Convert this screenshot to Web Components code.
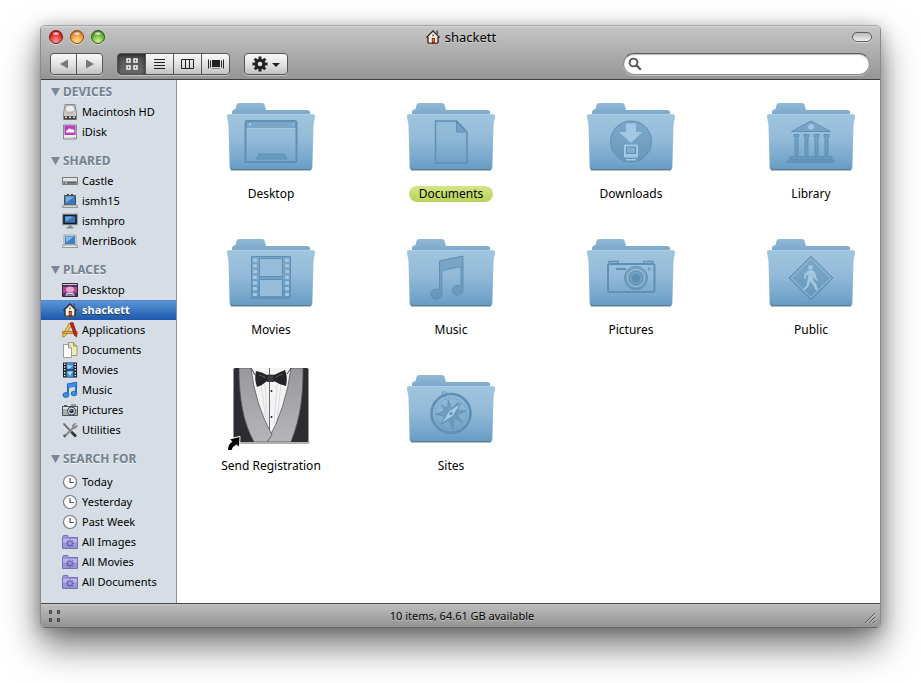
<!DOCTYPE html>
<html lang="en">
<head>
<meta charset="utf-8">
<title>shackett</title>
<style>
  html { height: 100%; }
  body {
    box-sizing: border-box; min-height: 100%; margin: 0; padding: 25px 40px 55px;
    display: flex; background: #fff; overflow: hidden;
    font: 11px/16px "Noto Sans", "Open Sans", sans-serif; color: #000;
  }
</style>
</head>
<body>
<finder-window>
  <title-bar slot="title">shackett</title-bar>
  <tool-bar slot="tools">
    <tool-group label="History">
      <tool-button icon="back" label="Back" size="nav"></tool-button>
      <tool-button icon="forward" label="Forward" size="nav"></tool-button>
    </tool-group>
    <tool-group label="View">
      <tool-button icon="grid" label="Icon view" pressed></tool-button>
      <tool-button icon="list" label="List view"></tool-button>
      <tool-button icon="columns" label="Column view"></tool-button>
      <tool-button icon="flow" label="Cover Flow view"></tool-button>
    </tool-group>
    <tool-group label="Action">
      <tool-button icon="action" label="Action menu" size="wide"></tool-button>
    </tool-group>
    <search-field slot="end"></search-field>
  </tool-bar>
  <side-bar slot="side">
    <side-section heading="DEVICES">
      <side-item icon="drive">Macintosh HD</side-item>
      <side-item icon="idisk">iDisk</side-item>
    </side-section>
    <side-section heading="SHARED">
      <side-item icon="server">Castle</side-item>
      <side-item icon="laptopOld">ismh15</side-item>
      <side-item icon="monitor">ismhpro</side-item>
      <side-item icon="laptop">MerriBook</side-item>
    </side-section>
    <side-section heading="PLACES">
      <side-item icon="desktop">Desktop</side-item>
      <side-item icon="home" selected>shackett</side-item>
      <side-item icon="apps">Applications</side-item>
      <side-item icon="docs">Documents</side-item>
      <side-item icon="film">Movies</side-item>
      <side-item icon="note">Music</side-item>
      <side-item icon="camera">Pictures</side-item>
      <side-item icon="tools">Utilities</side-item>
    </side-section>
    <side-section heading="SEARCH FOR" spaced>
      <side-item icon="clock">Today</side-item>
      <side-item icon="clock">Yesterday</side-item>
      <side-item icon="clock">Past Week</side-item>
      <side-item icon="smart">All Images</side-item>
      <side-item icon="smart">All Movies</side-item>
      <side-item icon="smart">All Documents</side-item>
    </side-section>
  </side-bar>
  <file-grid>
    <file-item art="desktop">Desktop</file-item>
    <file-item art="documents" tagged>Documents</file-item>
    <file-item art="downloads">Downloads</file-item>
    <file-item art="library">Library</file-item>
    <file-item art="movies">Movies</file-item>
    <file-item art="music">Music</file-item>
    <file-item art="pictures">Pictures</file-item>
    <file-item art="public">Public</file-item>
    <file-item art="tuxedo">Send Registration</file-item>
    <file-item art="sites">Sites</file-item>
  </file-grid>
  <status-bar slot="status">10 items, 64.61 GB available</status-bar>
</finder-window>

<script>
const svg = (w, h, body) =>
  `<svg width="${w}" height="${h}" viewBox="0 0 ${w} ${h}" aria-hidden="true">${body}</svg>`;

const range = (n, f) => Array.from({ length: n }, (_, i) => f(i)).join('');
const teeth = (n, cx, cy, r, w, h, fill) => range(n, i =>
  `<rect x="${cx - w / 2}" y="${cy - r}" width="${w}" height="${h}" fill="${fill}" transform="rotate(${i * 360 / n} ${cx} ${cy})"/>`);

/* Toolbar glyphs */
const TOOL = {
  back: svg(16, 16, '<path d="M12 3.5v9L4 8z" fill="#777"/>'),
  forward: svg(16, 16, '<path d="M4 3.5v9L12 8z" fill="#777"/>'),
  grid: svg(14, 14, '<g fill="#333" stroke="#fff" stroke-width="1.4"><rect x="2" y="2" width="3" height="3"/><rect x="9" y="2" width="3" height="3"/><rect x="2" y="9" width="3" height="3"/><rect x="9" y="9" width="3" height="3"/></g>'),
  list: svg(12, 12, '<path d="M0 1.5h11M0 4.5h11M0 7.5h11M0 10.5h11" stroke="#222"/>'),
  columns: svg(14, 12, '<path d="M.5 1.5h12v9H.5zM4.5 1v10M8.5 1v10" fill="none" stroke="#222"/>'),
  flow: svg(16, 12, '<path d="M.5 1.5v9M2.5 2.5v7M13.5 2.5v7M15.5 1.5v9" stroke="#222"/><path d="M4 2h8v7H4z" fill="#222"/><path d="M4 10.5h8" stroke="#888"/>'),
  action: svg(30, 16,
    teeth(8, 9, 8, 7.5, 3, 4, '#222') +
    '<circle cx="9" cy="8" r="3.8" fill="none" stroke="#222" stroke-width="3"/><path d="M21 7h8l-4 4z" fill="#222"/>')
};

const house =
  '<path d="M3 8v6.500h10V8L8 3.200z" fill="#f6efe4"/><path d="M3 13.500h10v1.500H3z" fill="#6b4a3b"/>' +
  '<path d="M11.200 1.500h1.800v4l-1.800-1.500z" fill="#555"/>' +
  '<path d="M1.300 8.600 8 1.900l6.700 6.700M3 8v6M13 8v6" fill="none" stroke="#2b2422" stroke-width="1.300"/>' +
  '<rect x="6.800" y="9" width="3" height="5.500" fill="#7e1f10"/><rect x="7.600" y="10" width="1.400" height="3" fill="#e07a2c"/><path d="M7 5.500h2v2H7z" fill="#b0814f"/>';

const clock =
  '<circle cx="8" cy="8" r="6.500" fill="#fff" stroke="#76797e" stroke-width="1.200"/>' +
  '<path d="M8 4v4.500h3.800" fill="none" stroke="#555" stroke-width="1.200"/>';

/* Sidebar pictures, 16 by 16 */
const SIDE = {
  drive: '<path d="M3 .5h10l1.500 9v6h-13v-6z" fill="#c9c9c9" stroke="#777" stroke-width=".8"/><ellipse cx="8" cy="5" rx="4.500" ry="3.600" fill="#eee" stroke="#a5a5a5" stroke-width=".8"/><path d="M5 7.500h6v2.500H5z" fill="#b5b5b5"/><path d="M2 12h12v3.500H2z" fill="#444"/><path d="M3 12.500h2v1.500H3zM7 12.500h2v1.500H7zM11 12.500h2v1.500h-2z" fill="#ddd"/>',
  idisk: '<path d="M1.500 1h13v14h-13z" fill="#ddd" stroke="#777" stroke-width=".8"/><path d="M2.500 1.500h11v9.500h-11z" fill="#b63fc4"/><path d="M4 8.500a2 2 0 0 1 1.500-2.500 2.300 2.300 0 0 1 4-.5A2 2 0 0 1 12 8.500z" fill="#fff"/><path d="M2 12h12" stroke="#fff"/><circle cx="12.500" cy="13.500" r=".6" fill="#5a5"/>',
  server: '<path d="M.5 4.500h15v7H.5z" fill="#9a9a9a" stroke="#6a6a6a" stroke-width=".8"/><path d="M1 5h14v3H1z" fill="#e4e4e4"/><path d="M2 9.800h12" stroke="#444"/><path d="M3 9.800h2" stroke="#ddd"/>',
  laptopOld: '<path d="M2.500 2.500h11v9.500h-11z" fill="#3b76b8" stroke="#4b4f55"/><path d="M3.500 3.500h9L4 10z" fill="#76ace0"/><path d="M5 1.500h2M9 1.500h2" stroke="#444"/><path d="M1 12h14l.8 2.500H.2z" fill="#d5d5d5" stroke="#777" stroke-width=".7"/>',
  monitor: '<path d="M.7 1.200h14.600v10.500H.7z" fill="#3b76b8" stroke="#9a9ea4" stroke-width="1.200"/><path d="M2 2.500h12v8H2z" fill="#3b76b8" stroke="#15191f" stroke-width="1.500"/><path d="M3 3.500h8l-7 5z" fill="#6aa3dc"/><path d="M6.500 12.500h3v2h-3z" fill="#888"/><path d="M4.500 14.800h7" stroke="#777" stroke-width="1.200"/>',
  laptop: '<path d="M2.500 2.500h11v9h-11z" fill="#3f7fc6" stroke="#e8e8e8"/><path d="M2 2h12v10H2z" fill="none" stroke="#777" stroke-width=".6"/><path d="M3.500 3.500h8l-7 6z" fill="#86b9ea"/><path d="M1 12h14l.8 2.500H.2z" fill="#eee" stroke="#777" stroke-width=".7"/>',
  desktop: '<path d="M.5 1.500h15v13H.5z" fill="#5b2a63" stroke="#2d2a3c"/><path d="M1 5h14v6H1z" fill="#b04a97"/><ellipse cx="8" cy="7.500" rx="4" ry="3" fill="#e8a5cc"/><path d="M1 2h14v1H1z" fill="#ccc"/><path d="M3 13.500 5 11h6l2 2.500z" fill="#e6e6f0"/><path d="M5 12.500h6" stroke="#4a78b5"/>',
  home: house,
  apps: '<path d="M7.500 1 9.500 3 3.500 14 .8 15l.2-3z" fill="#f0d04a" stroke="#8a6a10" stroke-width=".7"/><path d="M0 10.500h15.500" stroke="#8a5a12" stroke-width="2.600"/><path d="M.5 10.500h14.500" stroke="#e8b53a" stroke-width="1.500"/><path d="M8 1l3-.5 4 12-.5 2.500-2-1.500z" fill="#c3241a" stroke="#7a120c" stroke-width=".6"/>',
  docs: '<path d="M6.500.5h5l3.500 3.500v9.500H6.500z" fill="#f0eab0" stroke="#8b865c" stroke-width=".8"/><path d="M11.500.5V4H15" fill="#cfc77f" stroke="#8b865c" stroke-width=".8"/><path d="M1.500 2.500h5L9.500 6v9.500h-8z" fill="#fff" stroke="#888" stroke-width=".8"/><path d="M6.500 2.500V6h3" fill="#ddd" stroke="#888" stroke-width=".8"/>',
  film: '<path d="M1 .5h14v15H1z" fill="#15181c"/><path d="M4.500 1h7v6.500h-7zM4.500 8.500h7V15h-7z" fill="#3f8fd8"/><path d="M5 3l6 1-5 3zM5 10l6-1-3 5z" fill="#a9d8f8"/><path d="M2.700 1.500v14M13.300 1.500v14" stroke="#eee" stroke-width="1.400" stroke-dasharray="1.500 1.300"/>',
  note: '<path d="M6 12.500V2.500L14 1v10" fill="none" stroke="#1b61b3" stroke-width="1.800"/><path d="M5.300 1.900 14.800.3v3.800L5.300 5.800z" fill="#3b8fe0" stroke="#1b61b3" stroke-width=".6"/><ellipse cx="3.900" cy="13" rx="3" ry="2.400" fill="#3b8fe0" stroke="#1b61b3" stroke-width=".8"/><ellipse cx="12" cy="11.500" rx="2.900" ry="2.300" fill="#3b8fe0" stroke="#1b61b3" stroke-width=".8"/>',
  camera: '<path d="M.5 4.500h15v9H.5z" fill="#a9adb2" stroke="#4d5157"/><path d="M1 5h14v2H1z" fill="#e2e4e6"/><path d="M2 3.500h3M9 3h5" stroke="#555"/><circle cx="9.500" cy="9" r="4" fill="#dfe2e6" stroke="#444"/><circle cx="9.500" cy="9" r="2.300" fill="#23344f"/><circle cx="9" cy="8.300" r=".8" fill="#8fb4e8"/>',
  tools: '<path d="M2 2 13 14" stroke="#555" stroke-width="1.600"/><path d="M9.500 10 14 14.500" stroke="#333" stroke-width="2.600"/><path d="M13 4 3 14" stroke="#888" stroke-width="2.200"/><path d="M10.500 4.500c0-2 1.500-3.300 3.500-3l-2 2 1 1.200 2.200-1.500c.2 2-1.200 3.300-3 3.300z" fill="#9a9a9a" stroke="#666" stroke-width=".5"/><path d="M1 1l2.500.8.5 2-2 .2z" fill="#777"/><path d="M1.500 13l2 2" stroke="#555" stroke-width="1.800"/>',
  clock,
  smart: '<path d="M.5 3.500 1.500 1.500h4l1 2h9v11H.5z" fill="#9a93d6" stroke="#655ea8" stroke-width=".8"/><path d="M1 5h14v3.500H1z" fill="#b9b4ea"/>' + teeth(8, 8, 9.500, 4, 1, 2, '#655ea8') + '<circle cx="8" cy="9.500" r="2.400" fill="none" stroke="#655ea8"/>'
};

/* Emblems pressed into the folder fronts */
const D = '#5e8fb5', F = 'rgba(78,128,168,.42)', L = '#a3c8e1';
const perf = x => range(7, i => `<rect x="${x}" y="${28.500 + i * 5.7}" width="4" height="3.400" rx=".8" fill="${L}"/>`);
const EMBLEM = {
  desktop: `<rect x="22.500" y="27" width="51" height="41" rx="1.500" fill="none" stroke="${D}" stroke-width="2"/><path d="M23 28h50v6H23z" fill="${F}"/><path d="M24 34.500h48" stroke="${L}"/><circle cx="27" cy="30.500" r="1.300" fill="${L}"/><circle cx="70" cy="30.500" r=".8" fill="${L}"/><path d="M33 65l3-5h25l3 5z" fill="${F}" stroke="${D}"/>`,
  documents: `<path d="M32.500 27h21L64 38v31H32.500z" fill="rgba(82,134,176,.08)" stroke="${D}" stroke-width="1.500"/><path d="M53.500 27v11H64z" fill="${F}" stroke="${D}"/>`,
  downloads: `<circle cx="48" cy="47.500" r="20.500" fill="${F}" stroke="${D}"/><path d="M43 29.500h10V38h6L48 49 36 38h7z" fill="${L}"/><rect x="41" y="50.500" width="14" height="13" rx="1" fill="${L}"/><rect x="43.500" y="53" width="9" height="6.500" fill="#7fadcd" stroke="${D}"/><path d="M43 65h10v1.500H43z" fill="${L}"/>`,
  library: `<g fill="${F}" stroke="${D}"><path d="M28.500 37.500 48 27l19.500 10.500z"/><path d="M27 62.500h42V66H27zM24.500 66h47v2.500h-47z"/>${[31, 41, 51, 61].map(x => `<path d="M${x} 40.500h5v2h-1V62h-3V42.500h-1z"/>`).join('')}</g><circle cx="48" cy="33" r="2.800" fill="${L}"/>`,
  movies: `<path d="M28.500 26.500h39v42h-39z" fill="${F}" stroke="${D}"/><path d="M36.500 28.500h23v18h-23zM36.500 49.500h23v17h-23z" fill="#95bdd9" stroke="${D}"/>${perf(30)}${perf(62)}`,
  music: `<path d="M36.500 31 60 26v34.500a5.500 5 0 1 1-2-4V36.500L38.800 40.500V64a5.500 5 0 1 1-2.300-4z" fill="${F}" stroke="${D}"/>`,
  pictures: `<g fill="none" stroke="${D}"><rect x="25" y="34" width="46.500" height="28" rx="2" stroke-width="2"/><path d="M26 33v-1.500h9V33M61 33v-1.500h9V33" stroke-width="1.500"/><circle cx="53" cy="48" r="11.500" fill="${F}"/><circle cx="53" cy="48" r="8.500" stroke="${L}"/><circle cx="53" cy="48" r="7"/><circle cx="53" cy="48" r="4" fill="${D}"/><path d="M33 39h10" stroke-width="2"/><circle cx="66" cy="39" r="1"/></g>`,
  public: `<path d="M48 26 70 48 48 70 26 48z" fill="${F}" stroke="${D}"/><path d="M48 28.500 67.500 48 48 67.500 28.500 48z" fill="none" stroke="${L}" stroke-width=".8"/><circle cx="47.500" cy="37.500" r="2.400" fill="${L}"/><path d="M45 41l4-1 3 2 1.500 6 1.500 2-1 1-3-3-.5-2-.5 4 3 4 2 6-2 .5-3-6-3-3-1.500 5-4 4-1.500-1.300 3.500-3.700 1.500-8 .5-3-2 1-1 3.500-1.500-.5.500-4.500z" fill="${L}"/>`,
  sites: `<circle cx="41.500" cy="28" r="2.300" fill="none" stroke="${D}"/><circle cx="48" cy="47.500" r="19.500" fill="rgba(82,134,176,.12)" stroke="${D}" stroke-width="2.600"/><circle cx="48" cy="47.500" r="15.500" fill="none" stroke="${D}" stroke-dasharray="1 1.500"/><path d="M45 34l4 9 6-7-2 8 10 1-9 4 5 7-8-4-1 11-4-9-7 4 3-7-9-3 9-3-4-6 7 3z" fill="${F}" stroke="${D}" stroke-width=".8"/><path d="M58 37 50.500 50 38 58l7.500-13z" fill="${L}" stroke="${D}"/><circle cx="48" cy="47.500" r="1.500" fill="${D}"/>`
};

const folder = emblem => svg(96, 88, `
  <defs>
    <linearGradient id="front" x2="0" y2="1"><stop offset="0" stop-color="#a0c5de"/><stop offset=".45" stop-color="#93bbd8"/><stop offset=".9" stop-color="#70a3c9"/><stop offset="1" stop-color="#6699be"/></linearGradient>
    <linearGradient id="back" x2="0" y2="1"><stop offset="0" stop-color="#92b9d5"/><stop offset="1" stop-color="#74a4c7"/></linearGradient>
  </defs>
  <path d="M8 75.500h80v1.500H8z" fill="#000" opacity=".25"/>
  <path d="M9 24v-6q0-2 2-2.500l1.500-.5 1-4q.5-2 2.500-2H39q2.300 0 2.600 2l1.400 5H84.500q2.500 0 2.500 2v6z" fill="url(#back)"/>
  <path d="M7 20h82q3.500 0 3 3l-1.500 8L89.300 74q-.1 1.500-1.500 1.500H8.200q-1.400 0-1.500-1.500L5.500 31 4 23q-.5-3 3-3z" fill="url(#front)"/>
  <path d="M6.500 20.500h83" stroke="#b2d0e5"/><path d="M8 75.500h80" stroke="#557f9f"/>
  ${emblem}`);

const tuxedo = svg(96, 88, `
  <defs>
    <linearGradient id="lapel" x2="0" y2="1"><stop offset="0" stop-color="#98989c"/><stop offset="1" stop-color="#b6b6ba"/></linearGradient>
    <clipPath id="card"><rect x="10.500" y="2" width="75" height="74" rx="1.500"/></clipPath>
  </defs>
  <rect x="9.500" y="75" width="77" height="3" rx="1.500" fill="#000" opacity=".3"/>
  <g clip-path="url(#card)">
    <path d="M10 2h76v74H10z" fill="#2c2d33"/>
    <path d="M26 2h44L60 50 48 74 36 50z" fill="#f4f4f5"/>
    <path d="M38 18l5 36M42 18l3 40M54 18l-3 40M58 18l-4 36" stroke="#d4d4d8" stroke-width=".8"/>
    <path d="M46.500 2v66" stroke="#6c6c70"/>
    <path d="M80 2C80 30 78 50 68 76H44Q63 42 68 2z" fill="url(#lapel)" stroke="#55555a" stroke-width=".8"/>
    <path d="M16 2c0 30 4 54 15 74h13l5-7Q32 38 28 2z" fill="url(#lapel)" stroke="#55555a" stroke-width=".8"/>
    <path d="M28 2l4 7M68 2l-4 6" stroke="#444"/>
    <circle cx="48.500" cy="25" r="1" fill="#222"/><circle cx="48.500" cy="51" r="1" fill="#222"/>
    <path d="M33 5q6 1 11 4h7q6-3 11-5 3 7 1 16-6-1-12-5h-7q-4 4-10 6-3-8-1-16z" fill="#242428"/>
    <path d="M44 9h7v6.500h-7z" fill="#3b3b42" stroke="#111" stroke-width=".6"/>
    <path d="M36 9q4 1 7 3M60 8q-4 1-8 4" stroke="#55555c" fill="none"/>
  </g>
  <path d="M5 84q0-6 4.500-8.500L7 73.500l9.500-2.500-.5 9.500-2.500-2Q10 80 8.500 84z" fill="#000" stroke="#fff" stroke-width="2" paint-order="stroke" stroke-linejoin="round"/>`);

/* Base class: each element supplies its styles and markup through render() */
class Base extends HTMLElement {
  constructor() { super(); this.attachShadow({ mode: 'open' }); }
  connectedCallback() { this.shadowRoot.innerHTML = this.render(); }
}
const METAL_TEXT = 'text-shadow: 0 1px 0 rgba(255,255,255,.4);';

customElements.define('finder-window', class extends Base {
  render() { return `<style>
    :host { flex: 1; min-width: 0; display: flex; flex-direction: column; box-sizing: border-box; border: 1px solid #8a8a8a;
      border-top-color: #a9a9a9; border-bottom-color: #666; border-radius: 5px; background: #fff;
      box-shadow: 0 18px 36px rgba(0,0,0,.54), 0 2px 16px rgba(0,0,0,.24); }
    header { background: linear-gradient(#d8d8d8 0, #c4c4c4 2px, #959595); border-bottom: 1px solid #404040; border-radius: 4px 4px 0 0; }
    .body { flex: 1; display: flex; }
    main { flex: 1; min-width: 0; }
  </style><header><slot name="title"></slot><slot name="tools"></slot></header>
  <div class="body"><slot name="side"></slot><main><slot></slot></main></div><slot name="status"></slot>`; }
});

customElements.define('title-bar', class extends Base {
  render() { return `<style>
    :host { display: grid; grid-template-columns: 1fr auto 1fr; align-items: center; height: 22px; padding: 0 8px; }
    .lights { display: flex; gap: 7px; }
    button { padding: 0; border: 0; }
    .lights button { box-sizing: border-box; width: 14px; height: 14px; border-radius: 50%; border: 1px solid var(--e);
      background: radial-gradient(ellipse 4px 2px at 50% 22%, #fff, transparent), radial-gradient(circle at 50% 85%, var(--l), var(--c) 60%, var(--e)); box-shadow: 0 1px 0 rgba(255,255,255,.5); }
    .close { --l: #ff9d95; --c: #e0262b; --e: #7c1517; }
    .min { --l: #ffe58a; --c: #ee9234; --e: #8c4a14; }
    .zoom { --l: #d2f58c; --c: #62ad36; --e: #2e5a17; }
    h1 { margin: 0; display: flex; align-items: center; gap: 4px; font-size: 13px; font-weight: 400; ${METAL_TEXT} }
    .pill { justify-self: end; box-sizing: border-box; width: 20px; height: 10px; border: 1px solid #5c5c5c; border-radius: 5px;
      background: linear-gradient(#bbb, #eee); box-shadow: 0 1px 0 rgba(255,255,255,.5); }
  </style>
  <div class="lights"><button class="close" aria-label="Close"></button><button class="min" aria-label="Minimize"></button><button class="zoom" aria-label="Zoom"></button></div>
  <h1>${svg(16, 16, house)}<span><slot></slot></span></h1><button class="pill" aria-label="Toggle toolbar"></button>`; }
});

customElements.define('tool-bar', class extends Base {
  render() { return `<style>
    :host { display: flex; justify-content: space-between; padding: 5px 10px 4px 9px; }
    .start { display: flex; gap: 14px; }
  </style><div class="start" role="toolbar" aria-label="Tools"><slot></slot></div><slot name="end"></slot>`; }
});

customElements.define('tool-group', class extends Base {
  render() { return `<style>
    :host { display: flex; }
    div { display: flex; box-sizing: border-box; height: 22px; border: 1px solid #555; border-radius: 4px; overflow: hidden; gap: 1px;
      background: #555; box-shadow: 0 1px 0 rgba(255,255,255,.4); }
  </style><div role="group" aria-label="${this.getAttribute('label')}"><slot></slot></div>`; }
});

customElements.define('tool-button', class extends Base {
  render() {
    const on = this.hasAttribute('pressed');
    return `<style>
    :host { display: flex; width: 27px; }
    :host([size="nav"]) { width: 25px; }
    :host([size="wide"]) { width: 42px; }
    button { flex: 1; display: flex; align-items: center; justify-content: center; padding: 0; border: 0;
      background: linear-gradient(#fafafa, #e2e2e2 50%, #c2c2c2); }
    button[aria-pressed="true"] { background: linear-gradient(#4a4a4a, #707070); box-shadow: inset 0 1px 4px #222; }
    svg { flex: none; }
  </style><button aria-label="${this.getAttribute('label')}" aria-pressed="${on}">${TOOL[this.getAttribute('icon')]}</button>`; }
});

customElements.define('search-field', class extends Base {
  render() { return `<style>
    :host { display: flex; flex: 0 1 247px; }
    label { flex: 1; display: flex; align-items: center; box-sizing: border-box; height: 22px; padding: 0 10px 0 4px; border: 1px solid #8c8c8c;
      border-top-color: #5c5c5c; border-radius: 11px; background: #fff; box-shadow: 0 1px 0 rgba(255,255,255,.4), inset 0 1px 1px #bbb; }
    input { flex: 1; min-width: 0; border: 0; outline: 0; padding: 0 2px; background: none; font: inherit; }
  </style><label>${svg(14, 14, '<circle cx="5.500" cy="5.500" r="3.900" fill="none" stroke="#555" stroke-width="1.900"/><path d="M8.300 8.300l4.500 4.500" stroke="#555" stroke-width="2.300"/>')}<input type="text" aria-label="Search"></label>`; }
});

customElements.define('side-bar', class extends Base {
  render() { return `<style>
    :host { flex: none; width: 135px; border-right: 1px solid #8b8f94; background: #d6dde5; }
    nav { display: flex; flex-direction: column; gap: 9px; padding: 2px 0 8px; }
  </style><nav aria-label="Places"><slot></slot></nav>`; }
});

customElements.define('side-section', class extends Base {
  render() { return `<style>
    :host { display: block; }
    h2 { margin: 0; }
    button { display: flex; align-items: center; gap: 3px; width: 100%; height: 20px; padding: 0 0 0 10px; border: 0; background: none;
      font: bold 12px/16px "Noto Sans", "Open Sans", sans-serif; color: #75818d; text-shadow: 0 1px 0 #eef2f6; white-space: nowrap; }
    :host([spaced]) div { padding-top: 3px; }
  </style><h2><button aria-expanded="true">${svg(9, 8, '<path d="M0 0h9L4.500 8z" fill="#7b8794"/>')}<span>${this.getAttribute('heading')}</span></button></h2><div><slot></slot></div>`; }
});

customElements.define('side-item', class extends Base {
  render() { return `<style>
    :host { display: block; }
    a { display: flex; align-items: center; gap: 4px; height: 20px; padding-left: 21px; color: #000; text-decoration: none; white-space: nowrap; }
    :host([selected]) a { background: linear-gradient(#4580c5 0, #5a95d6 1px, #1c57ab); color: #fff; font-weight: bold; text-shadow: 0 1px 1px rgba(0,0,0,.5); }
  </style><a href="#">${svg(16, 16, SIDE[this.getAttribute('icon')])}<span><slot></slot></span></a>`; }
});

customElements.define('file-grid', class extends Base {
  render() { return `<style>
    :host { display: grid; grid-template-columns: repeat(auto-fill, 120px); gap: 28px 60px; padding: 14px 0 14px 34px; }
  </style><slot></slot>`; }
});

customElements.define('file-item', class extends Base {
  render() {
    const art = this.getAttribute('art');
    return `<style>
    :host { display: block; }
    a { display: flex; flex-direction: column; align-items: center; gap: 4px; color: #000; font-size: 12px; text-decoration: none; white-space: nowrap; }
    span { padding: 0 10px; border-radius: 8px; }
    :host([tagged]) span { background: linear-gradient(#d5e684, #b7d257); }
  </style><a href="#">${art === 'tuxedo' ? tuxedo : folder(EMBLEM[art])}<span><slot></slot></span></a>`; }
});

customElements.define('status-bar', class extends Base {
  render() { return `<style>
    :host { display: grid; grid-template-columns: 1fr auto 1fr; align-items: center; height: 23px; padding: 0 4px 0 7px;
      border-top: 1px solid #454845; border-radius: 0 0 4px 4px; background: linear-gradient(#d0d0d0 0, #bcbcbc 1px, #939393); ${METAL_TEXT} }
    .grip { justify-self: end; align-self: end; }
    svg { display: block; }
  </style>${svg(14, 14, '<g fill="#777" stroke="#3f3f3f"><path d="M1.500 1.500h2v3h-2zM9.500 1.500h2v3h-2zM1.500 9.500h2v3h-2zM9.500 9.500h2v3h-2z"/></g>')}
  <span role="status"><slot></slot></span>
  <span class="grip">${svg(12, 16, '<path d="M1 12 11 2M5 12l6-6M9 12l2-2" stroke="#555"/><path d="M2 12.500 11.500 3M6 12.500l5.500-5.500M10 12.500l1.500-1.500" stroke="#ddd" stroke-width=".7"/>')}</span>`; }
});
</script>
</body>
</html>
